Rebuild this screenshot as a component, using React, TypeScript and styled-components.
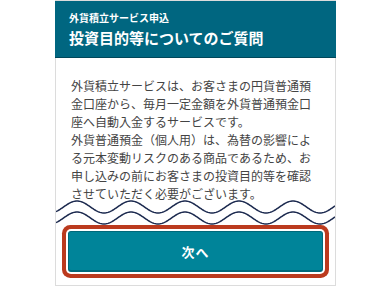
import React, { FC } from 'react'
import styled, { createGlobalStyle } from 'styled-components'

const GlobalStyle = createGlobalStyle`
  html, body {
    margin: 0;
    padding: 0;
    background: #fff;
  }
  body {
    font-family: "Noto Sans CJK JP", "Noto Sans", sans-serif;
  }
`

const Page = styled.div`
  display: flex;
  justify-content: center;
  padding-left: 1px;
`

const Panel = styled.section`
  width: 279px;
  border: 1px solid #dcdcdc;
  background: #fff;
  display: flex;
  flex-direction: column;
`

const Header = styled.header`
  background: #006680;
  border-bottom: 1px solid #00475a;
  padding: 10px 14px 9px;
  color: #fff;
  margin: 0 -1px;
`

const Overline = styled.p`
  margin: 0 0 3px;
  font-size: 10px;
  line-height: 14px;
  font-weight: 700;
`

const Title = styled.h1`
  margin: 0;
  font-size: 15px;
  line-height: 20px;
  font-weight: 700;
`

const Body = styled.div`
  padding: 19px 15px 0;
  color: #444;
  font-size: 12px;
  line-height: 18px;

  p {
    margin: 0;
  }
`

const Waves = styled.svg`
  display: block;
  margin-top: -5px;
  width: 279px;
  height: 28px;
`

const Footer = styled.div`
  padding: 5px 12px 13px;
`

const NextButton = styled.button`
  display: block;
  width: 100%;
  height: 41px;
  border: 1px solid #00697a;
  border-bottom-width: 2px;
  border-radius: 3px;
  background: #008499;
  color: #fff;
  font-family: inherit;
  font-size: 13px;
  font-weight: 700;
  letter-spacing: 1px;
  cursor: pointer;
  box-shadow: 0 0 0 2px #fff, 0 0 0 6px #bb3a1e;
`

const wavePath = (mid: number, amp: number, width: number, period: number, peakX: number) => {
  const pts: string[] = []
  for (let x = 0; x <= width; x += 1) {
    const y = mid - amp * Math.cos((2 * Math.PI * (x - peakX)) / period)
    pts.push(`${x === 0 ? 'M' : 'L'}${x} ${y.toFixed(2)}`)
  }
  return pts.join(' ')
}

const WaveDivider: FC = () => (
  <Waves viewBox="0 0 279 28" aria-hidden>
    <path d={wavePath(9, 6, 279, 54, 21)} fill="none" stroke="#1c2a4f" strokeWidth="1.5" />
    <path d={wavePath(20, 6, 279, 54, 21)} fill="none" stroke="#1c2a4f" strokeWidth="1.5" />
  </Waves>
)

export default function App() {
  return (
    <>
      <GlobalStyle />
      <Page>
        <Panel>
          <Header>
            <Overline>外貨積立サービス申込</Overline>
            <Title>投資目的等についてのご質問</Title>
          </Header>
          <Body>
            <p>外貨積立サービスは、お客さまの円貨普通預金口座から、毎月一定金額を外貨普通預金口座へ自動入金するサービスです。</p>
            <p>外貨普通預金（個人用）は、為替の影響による元本変動リスクのある商品であるため、お申し込みの前にお客さまの投資目的等を確認させていただく必要がございます。</p>
          </Body>
          <WaveDivider />
          <Footer>
            <NextButton type="button">次へ</NextButton>
          </Footer>
        </Panel>
      </Page>
    </>
  )
}
